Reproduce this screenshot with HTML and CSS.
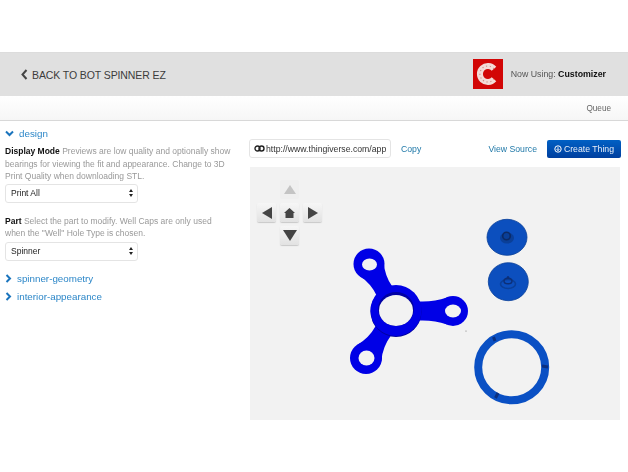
FILE: index.html
```html
<!DOCTYPE html>
<html lang="en">
<head>
<meta charset="utf-8">
<title>Customizer</title>
<link rel="stylesheet" href="styles.css">
</head>
<body>
<header class="topbar">
  <a class="back">
    <svg class="back-icon" width="7" height="11" viewBox="0 0 7 11"><path d="M5.500 1 1.500 5.500 5.500 10" fill="none" stroke="#444" stroke-width="2"/></svg>
    <span>BACK TO BOT SPINNER EZ</span>
  </a>
  <div class="using">
    <svg class="logo" width="30" height="30" viewBox="0 0 30 30">
      <rect width="30" height="30" fill="#d20606"/>
      <path d="M21 9.800A8 8 0 1 0 21 20.200" fill="none" stroke="#f3dcd8" stroke-width="6"/>
      <path d="M21 9.800A8 8 0 1 0 21 20.200" fill="none" stroke="#cf8f88" stroke-width="1.200" stroke-dasharray="1.200 2.600"/>
    </svg>
    <span class="using-label">Now Using: <b>Customizer</b></span>
  </div>
</header>
<nav class="subbar"><span>Queue</span></nav>
<main class="main">
  <aside class="params">
    <div class="group open"><svg width="9" height="7" viewBox="0 0 9 7"><path d="M1 1.500 4.500 5 8 1.500" fill="none" stroke="#1a74bd" stroke-width="2"/></svg><span>design</span></div>
    <p class="desc"><b>Display Mode</b> Previews are low quality and optionally show bearings for viewing the fit and appearance. Change to 3D Print Quality when downloading STL.</p>
    <div class="select"><span>Print All</span><i class="updown"></i></div>
    <p class="desc part"><b>Part</b> Select the part to modify. Well Caps are only used when the "Well" Hole Type is chosen.</p>
    <div class="select"><span>Spinner</span><i class="updown"></i></div>
    <div class="group first"><svg width="7" height="9" viewBox="0 0 7 9"><path d="M1.500 1 5 4.500 1.500 8" fill="none" stroke="#1a74bd" stroke-width="2"/></svg><span>spinner-geometry</span></div>
    <div class="group"><svg width="7" height="9" viewBox="0 0 7 9"><path d="M1.500 1 5 4.500 1.500 8" fill="none" stroke="#1a74bd" stroke-width="2"/></svg><span>interior-appearance</span></div>
  </aside>
  <section class="viewer">
    <div class="toolbar">
      <div class="url">
        <svg width="11" height="7" viewBox="0 0 11 7"><rect x="1" y="1" width="5" height="5" rx="2.500" fill="none" stroke="#222" stroke-width="1.400"/><rect x="5" y="1" width="5" height="5" rx="2.500" fill="none" stroke="#222" stroke-width="1.400"/></svg>
        <span>http://www.thingiverse.com/app</span>
      </div>
      <a class="link copy">Copy</a>
      <a class="link source">View Source</a>
      <a class="create"><svg width="8" height="8" viewBox="0 0 8 8"><circle cx="4" cy="4" r="3.200" fill="none" stroke="#fff" stroke-width="1"/><path d="M4 2.200V5.600M2.600 4.200 4 5.600 5.400 4.200" fill="none" stroke="#fff" stroke-width=".9"/></svg>Create Thing</a>
    </div>
    <div class="canvas">
      <div class="pad">
        <span class="btn faded"><i class="tri tri-up"></i></span>
        <span class="btn first-col"><i class="tri tri-left"></i></span>
        <span class="btn"><svg width="11" height="10" viewBox="0 0 11 10"><path d="M5.500 0 11 5H9.500V10H1.500V5H0Z" fill="#444"/></svg></span>
        <span class="btn"><i class="tri tri-right"></i></span>
        <span class="btn down"><i class="tri tri-down"></i></span>
      </div>
      <svg class="scene" width="370" height="253" viewBox="250 167 370 253">
        <g fill="#0000e6">
          <path transform="translate(396 311) rotate(-120)" d="M18 -11L24 -9Q36 -8 48 -13.500L48 13.500Q36 8 24 9L18 11Z"/>
          <path transform="translate(396 311)" d="M18 -11L24 -9.500Q38 -9 51 -13.500L51 13.500Q38 9 24 9.500L18 11Z"/>
          <path transform="translate(396 311) rotate(122.600)" d="M18 -11L24 -9Q37 -8 50 -14.500L50 14.500Q37 8 24 9L18 11Z"/>
          <circle cx="369" cy="264" r="15.500"/>
          <circle cx="453" cy="311" r="15"/>
          <circle cx="366" cy="358" r="16"/>
          <ellipse cx="396" cy="311.500" rx="25.500" ry="25.500" fill="#00009c"/>
          <ellipse cx="396" cy="310.500" rx="25.500" ry="25.500"/>
          <ellipse cx="396" cy="309" rx="18" ry="17" fill="#0000a4"/>
        </g>
        <g fill="#f2f2f2">
          <ellipse cx="396" cy="310.500" rx="17" ry="15.500"/>
          <ellipse cx="369.500" cy="264.500" rx="7.500" ry="6"/>
          <ellipse cx="453" cy="311" rx="8" ry="6.500"/>
          <ellipse cx="366.500" cy="358" rx="8" ry="7.500"/>
        </g>
        <circle cx="466" cy="331" r=".6" fill="#777"/>
        <ellipse cx="507" cy="237.300" rx="20" ry="18" fill="#0c4fbe" stroke="#0a4099" stroke-width=".8"/>
        <ellipse cx="507" cy="238" rx="7" ry="5.500" fill="#0a3f98"/>
        <ellipse cx="506.500" cy="236" rx="3.800" ry="3.800" fill="none" stroke="#0c2a66" stroke-width="1.600"/>
        <ellipse cx="508.300" cy="281.700" rx="20" ry="19" fill="#0c4fbe" stroke="#0a4099" stroke-width=".8"/>
        <ellipse cx="508" cy="284" rx="7.500" ry="4.500" fill="none" stroke="#0a3f98" stroke-width="1.600"/>
        <ellipse cx="508" cy="281" rx="4" ry="2.800" fill="none" stroke="#0c2f78" stroke-width="1.400"/>
        <ellipse cx="508" cy="277.500" rx="1.300" ry="1.500" fill="#0c2f78"/>
        <ellipse cx="511.700" cy="367.300" rx="33.500" ry="33" fill="none" stroke="#0a50c4" stroke-width="8"/>
        <path d="M493.500 337 495 341M542 366 548 367M498 393 495.500 398" fill="none" stroke="#0a2f80" stroke-width="3"/>
      </svg>
    </div>
  </section>
</main>
</body>
</html>
```
FILE: styles.css
```css
* { box-sizing: border-box; }
html, body { margin: 0; padding: 0; }
body {
  background: #fff;
  font-family: "Liberation Sans", Arial, sans-serif;
  color: #333;
  width: 628px;
  height: 472px;
  overflow: hidden;
  padding-top: 52px;
  filter: blur(.35px);
}
.topbar {
  height: 44px;
  background: #e0e0e0;
  border-top: 1px solid #dcdcdc;
  display: flex;
  align-items: center;
  justify-content: space-between;
  padding: 0 22px 0 21px;
}
.back { display: flex; align-items: center; gap: 4px; font-size: 10.5px; color: #3c3c3c; letter-spacing: -.1px; }
.using { display: flex; align-items: center; gap: 8px; padding-bottom: 1px; }
.logo { display: block; }
.using-label { font-size: 8.800px; color: #555; }
.using-label b { color: #111; }
.subbar {
  height: 25px;
  background: linear-gradient(#fff, #f6f6f6);
  border-bottom: 1px solid #d8d8d8;
  display: flex;
  align-items: center;
  justify-content: flex-end;
  padding-right: 17px;
  font-size: 8.200px;
  color: #666;
}
.main { display: flex; }
.params { width: 249px; padding: 5px 0 0 5px; }
.group { display: flex; align-items: center; gap: 5px; font-size: 9.800px; color: #2d87c8; height: 14px; }
.group.first { margin-top: 11px; margin-bottom: 4px; }
.desc { margin: 5px 0 1px; width: 229px; font-size: 8.500px; line-height: 12.500px; color: #999; }
.desc b { color: #111; }
.desc.part { margin: 12px 0 2px; }
.select {
  width: 133px;
  height: 19px;
  background: #fff;
  border: 1px solid #e4e4e4;
  border-radius: 3px;
  display: flex;
  align-items: center;
  justify-content: space-between;
  padding: 0 3px 0 5px;
  font-size: 8.500px;
  color: #222;
}
.updown { display: block; width: 5px; height: 8px; position: relative; }
.updown::before, .updown::after {
  content: "";
  position: absolute;
  left: 0;
  border-left: 2.500px solid transparent;
  border-right: 2.500px solid transparent;
}
.updown::before { top: 0; border-bottom: 3px solid #222; }
.updown::after { bottom: 0; border-top: 3px solid #222; }
.viewer { width: 372px; padding-top: 18px; }
.toolbar { display: flex; align-items: center; height: 19px; font-size: 8.700px; }
.url {
  width: 142px;
  height: 19px;
  border: 1px solid #e4e4e4;
  border-radius: 3px;
  display: flex;
  align-items: center;
  gap: 1px;
  padding: 0 3px 0 4px;
  overflow: hidden;
  white-space: nowrap;
  color: #333;
}
.url svg { flex: none; }
.url span { overflow: hidden; }
.link { color: #1f78a8; }
.copy { margin-left: 10px; }
.source { margin-left: auto; }
.create {
  margin-left: 10px;
  width: 74px;
  height: 18px;
  background: linear-gradient(#0060c4, #003f9f);
  border-radius: 2px;
  color: #e6eef8;
  display: flex;
  align-items: center;
  justify-content: center;
  gap: 2px;
}
.canvas { position: relative; margin: 9px 0 0 1px; width: 370px; height: 253px; background: #f2f2f2; }
.scene { position: absolute; left: 0; top: 0; display: block; }
.pad {
  position: absolute;
  z-index: 1;
  left: 7px;
  top: 13px;
  display: grid;
  grid-template-columns: repeat(3, 19px);
  grid-auto-rows: 19px;
  gap: 4px;
}
.btn {
  display: flex;
  align-items: center;
  justify-content: center;
  background: linear-gradient(#f6f6f6, #e2e2e2);
  border-radius: 2px;
  box-shadow: 0 1px 1px #c8c8c8;
}
.btn.faded { grid-column: 2; background: #efefef; box-shadow: none; }
.btn.first-col { grid-column: 1; }
.btn.down { grid-column: 2; }
.tri { display: block; width: 0; height: 0; }
.tri-up { border-left: 6px solid transparent; border-right: 6px solid transparent; border-bottom: 9px solid #c4c4c4; }
.tri-down { border-left: 7px solid transparent; border-right: 7px solid transparent; border-top: 11px solid #444; }
.tri-left { border-top: 6px solid transparent; border-bottom: 6px solid transparent; border-right: 10px solid #444; }
.tri-right { border-top: 6px solid transparent; border-bottom: 6px solid transparent; border-left: 10px solid #444; }
```
